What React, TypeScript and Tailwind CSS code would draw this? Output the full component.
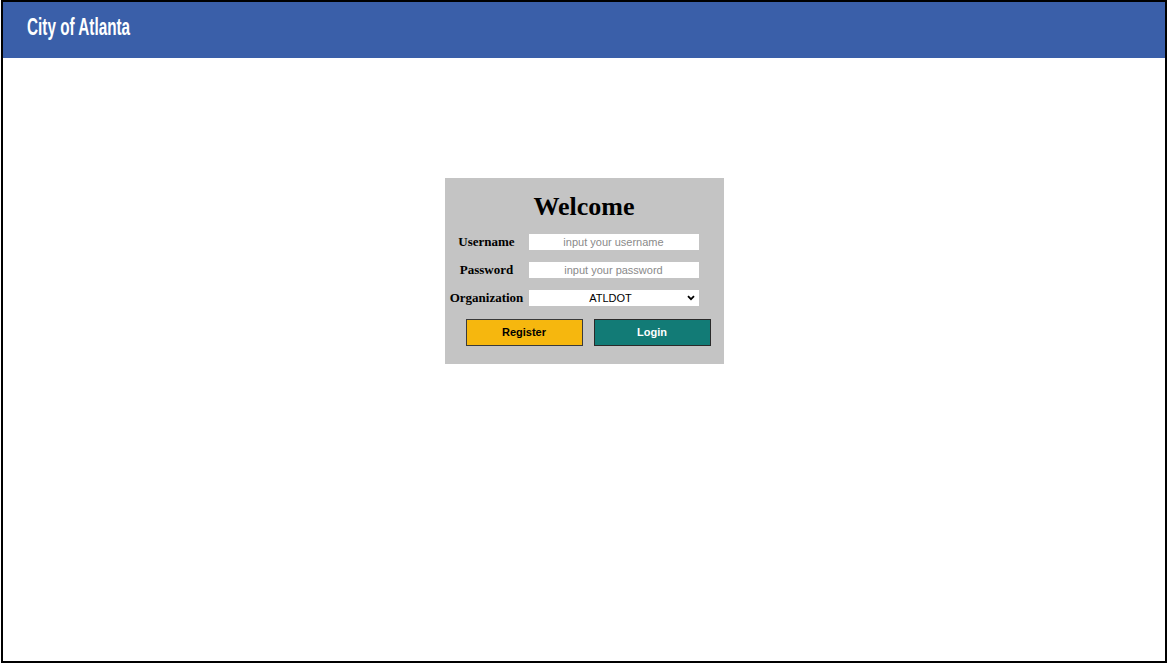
import React from "react";

export default function App() {
  return (
    <div className="w-[1168px] h-[664px] bg-white overflow-hidden">
      <div className="ml-[1px] w-[1166px] h-[663px] border-2 border-black flex flex-col">
        <header className="h-[56px] bg-[#3a5fa9] flex items-center pl-[24px] pb-[5px] shrink-0">
          <h1 className="text-white text-[23px] font-bold leading-none font-['Liberation_Sans',sans-serif] scale-x-[0.665] origin-left whitespace-nowrap">
            City of Atlanta
          </h1>
        </header>
        <main className="flex-1 flex justify-center pt-[120px]">
          <div className="w-[279px] h-[186px] bg-[#c4c4c4] pt-[14px] flex flex-col">
            <h2 className="text-center text-[26px] font-bold text-black font-['Liberation_Serif',serif] leading-[29px]">
              Welcome
            </h2>
            <div className="mt-[13px] flex flex-col gap-[12px] pl-[2px]">
              <div className="flex items-center gap-[2px] h-[16px]">
                <label className="w-[80px] text-center text-[13px] font-bold font-['Liberation_Serif',serif] text-black">
                  Username
                </label>
                <input
                  className="block w-[170px] h-[16px] bg-white text-center text-[11px] font-['Liberation_Sans',sans-serif] placeholder:text-[#8a8a8a] outline-none"
                  placeholder="input your username"
                />
              </div>
              <div className="flex items-center gap-[2px] h-[16px]">
                <label className="w-[80px] text-center text-[13px] font-bold font-['Liberation_Serif',serif] text-black">
                  Password
                </label>
                <input
                  type="password"
                  className="block w-[170px] h-[16px] bg-white text-center text-[11px] font-['Liberation_Sans',sans-serif] placeholder:text-[#8a8a8a] outline-none"
                  placeholder="input your password"
                />
              </div>
              <div className="flex items-center gap-[2px] h-[16px]">
                <label className="w-[80px] text-center text-[13px] font-bold font-['Liberation_Serif',serif] text-black">
                  Organization
                </label>
                <div className="relative w-[170px] h-[16px]">
                  <select className="block appearance-none w-full h-[16px] bg-white text-center [text-align-last:center] text-[11px] leading-[16px] font-['Liberation_Sans',sans-serif] text-black outline-none pr-[6px]">
                    <option>ATLDOT</option>
                  </select>
                  <svg
                    className="absolute right-[4px] top-[5px] pointer-events-none"
                    width="8"
                    height="6"
                    viewBox="0 0 8 6"
                  >
                    <path d="M1 1.2 L4 4.2 L7 1.2" fill="none" stroke="#000" strokeWidth="1.8" />
                  </svg>
                </div>
              </div>
            </div>
            <div className="mt-[13px] flex gap-[11px] pl-[21px]">
              <button className="w-[117px] h-[27px] bg-[#f6b70e] border border-[#3a3a3a] text-black text-[11px] font-bold font-['Liberation_Sans',sans-serif]">
                Register
              </button>
              <button className="w-[117px] h-[27px] bg-[#127b76] border border-[#2a2a2a] text-white text-[11px] font-bold font-['Liberation_Sans',sans-serif]">
                Login
              </button>
            </div>
          </div>
        </main>
      </div>
    </div>
  );
}
